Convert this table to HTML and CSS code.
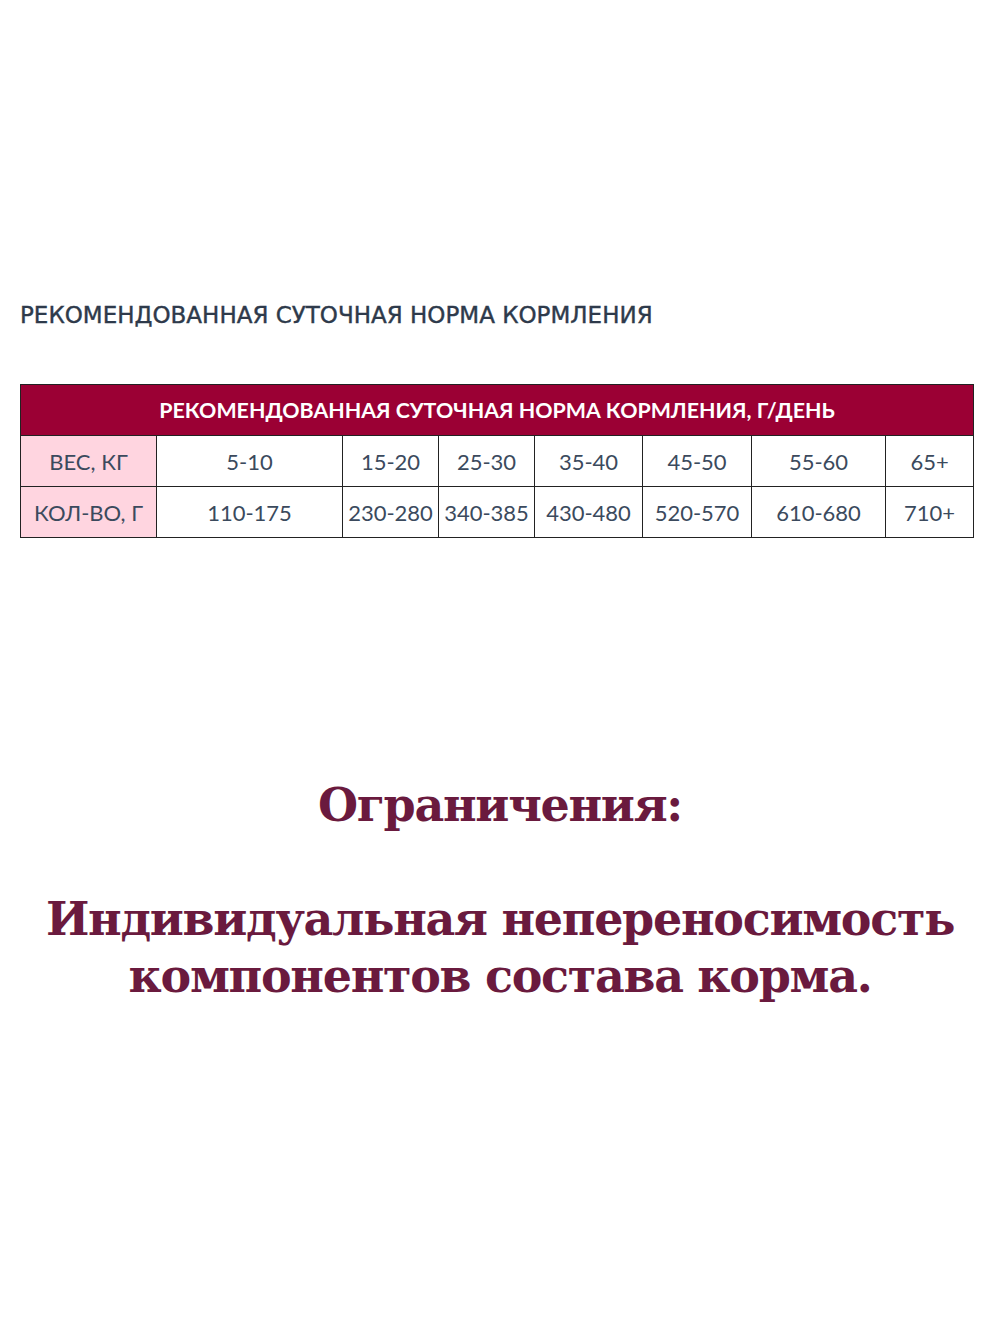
FILE: index.html
```html
<!DOCTYPE html>
<html lang="ru">
<head>
<meta charset="utf-8">
<title>Рекомендованная суточная норма кормления</title>
<link rel="stylesheet" href="styles.css">
</head>
<body>
<div class="page">
  <h2 class="title">РЕКОМЕНДОВАННАЯ СУТОЧНАЯ НОРМА КОРМЛЕНИЯ</h2>
  <table class="norm">
    <colgroup>
      <col class="c1"><col class="c2"><col class="c3"><col class="c4"><col class="c5"><col class="c6"><col class="c7"><col class="c8">
    </colgroup>
    <thead>
      <tr><th colspan="8">РЕКОМЕНДОВАННАЯ СУТОЧНАЯ НОРМА КОРМЛЕНИЯ, Г/ДЕНЬ</th></tr>
    </thead>
    <tbody>
      <tr><td class="lbl">ВЕС, КГ</td><td>5-10</td><td>15-20</td><td>25-30</td><td>35-40</td><td>45-50</td><td>55-60</td><td>65+</td></tr>
      <tr><td class="lbl">КОЛ-ВО, Г</td><td>110-175</td><td>230-280</td><td>340-385</td><td>430-480</td><td>520-570</td><td>610-680</td><td>710+</td></tr>
    </tbody>
  </table>
  <div class="limits">
    <p class="lim-head">Ограничения:</p>
    <p class="lim-text">Индивидуальная непереносимость<br>компонентов состава корма.</p>
  </div>
</div>
</body>
</html>
```
FILE: styles.css
```css
html, body {
  margin: 0;
  padding: 0;
  background: #ffffff;
}
.page {
  width: 1000px;
  padding-top: 300px;
}
.title {
  margin: 0 0 0 20px;
  font-family: "DejaVu Sans", sans-serif;
  font-weight: normal;
  font-size: 23px;
  line-height: 30px;
  color: #2e3a4b;
  -webkit-text-stroke: 0.4px #2e3a4b;
}
.norm {
  margin: 54px 0 0 20px;
  width: 953px;
  border-collapse: collapse;
  table-layout: fixed;
  font-family: Lato, "Open Sans", sans-serif;
}
.c1 { width: 136px; }
.c2 { width: 186px; }
.c3 { width: 96px; }
.c4 { width: 96px; }
.c5 { width: 108px; }
.c6 { width: 109px; }
.c7 { width: 134px; }
.c8 { width: 88px; }
.norm th {
  background: #9b0034;
  color: #ffffff;
  font-weight: bold;
  font-size: 21.4px;
  height: 50px;
  padding: 0;
  border: 1.5px solid #222;
  text-align: center;
}
.norm td {
  height: 50px;
  padding: 0;
  border: 1.5px solid #222;
  text-align: center;
  font-size: 22px;
  color: #3b4a5d;
  white-space: nowrap;
}
.norm td.lbl {
  background: #ffd5e0;
}
.limits {
  margin-top: 239px;
  text-align: center;
  font-family: "DejaVu Serif", serif;
  font-weight: bold;
  color: #6a1a3e;
  font-size: 46px;
  line-height: 57px;
  letter-spacing: -1.3px;
}
.limits p {
  margin: 0;
}
.lim-head {
  margin-bottom: 57px !important;
}
```
